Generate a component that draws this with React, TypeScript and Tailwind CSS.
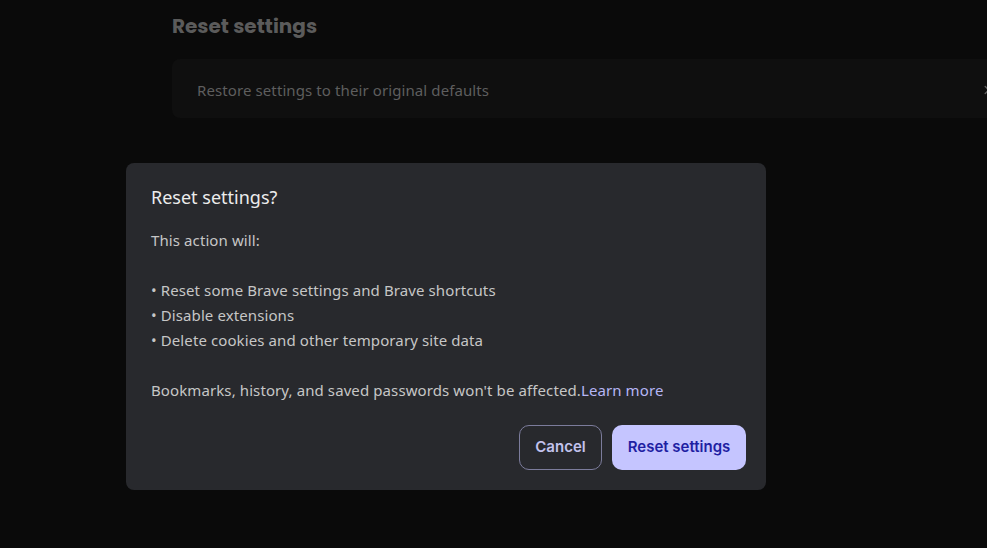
import { ChevronRight } from 'lucide-react'

const bullets = [
  'Reset some Brave settings and Brave shortcuts',
  'Disable extensions',
  'Delete cookies and other temporary site data',
]

export default function App() {
  return (
    <div className="relative h-[548px] w-[987px] overflow-hidden bg-[#0a0a0a]">
      {/* dimmed settings page behind the dialog */}
      <div className="w-[1010px] pl-[172px] pt-[13px]">
        <h2
          className="text-[20px] font-bold leading-[26px] text-[#5b5b5b]"
          style={{ fontFamily: 'Poppins, Inter, sans-serif' }}
        >
          Reset settings
        </h2>
        <div className="mt-[20px] flex h-[59px] items-center justify-between rounded-[8px] bg-[#0f0f0f] pl-[25px] pr-[16px] pt-[3px]">
          <span
            className="text-[15px] tracking-[0.1px] text-[#5e5e5e]"
            style={{ fontFamily: '"Noto Sans", "Open Sans", sans-serif' }}
          >
            Restore settings to their original defaults
          </span>
          <ChevronRight className="h-[14px] w-[14px] text-[#5e5e5e]" strokeWidth={2.5} />
        </div>
      </div>

      {/* modal dialog */}
      <div
        className="absolute left-[126px] top-[163px] w-[640px] rounded-[8px] bg-[#28292d] pb-[20px] pl-[25px] pr-[20px] pt-[22px]"
        style={{ fontFamily: '"Noto Sans", "Open Sans", sans-serif' }}
      >
        <h3 className="text-[18px] leading-[24px] text-[#ececec]">Reset settings?</h3>
        <div className="mt-[19px] text-[15px] leading-[25px] tracking-[0.1px] text-[#c6c6c6]">
          <p>This action will:</p>
          <p>&nbsp;</p>
          {bullets.map((b) => (
            <p key={b}>• {b}</p>
          ))}
          <p>&nbsp;</p>
          <p>
            Bookmarks, history, and saved passwords won't be affected.
            <a className="text-[#b6b6f5]">Learn more</a>
          </p>
        </div>
        <div
          className="mt-[22px] flex justify-end gap-[10px]"
          style={{ fontFamily: 'Inter, "Liberation Sans", sans-serif' }}
        >
          <button className="h-[45px] w-[83px] rounded-[10px] border border-[#7c7c9c] text-[15px] font-semibold text-[#c2c2ec]">
            Cancel
          </button>
          <button className="h-[45px] w-[134px] rounded-[10px] bg-[#c5c5ff] text-[15px] font-semibold text-[#1f1fa3]">
            Reset settings
          </button>
        </div>
      </div>
    </div>
  )
}
